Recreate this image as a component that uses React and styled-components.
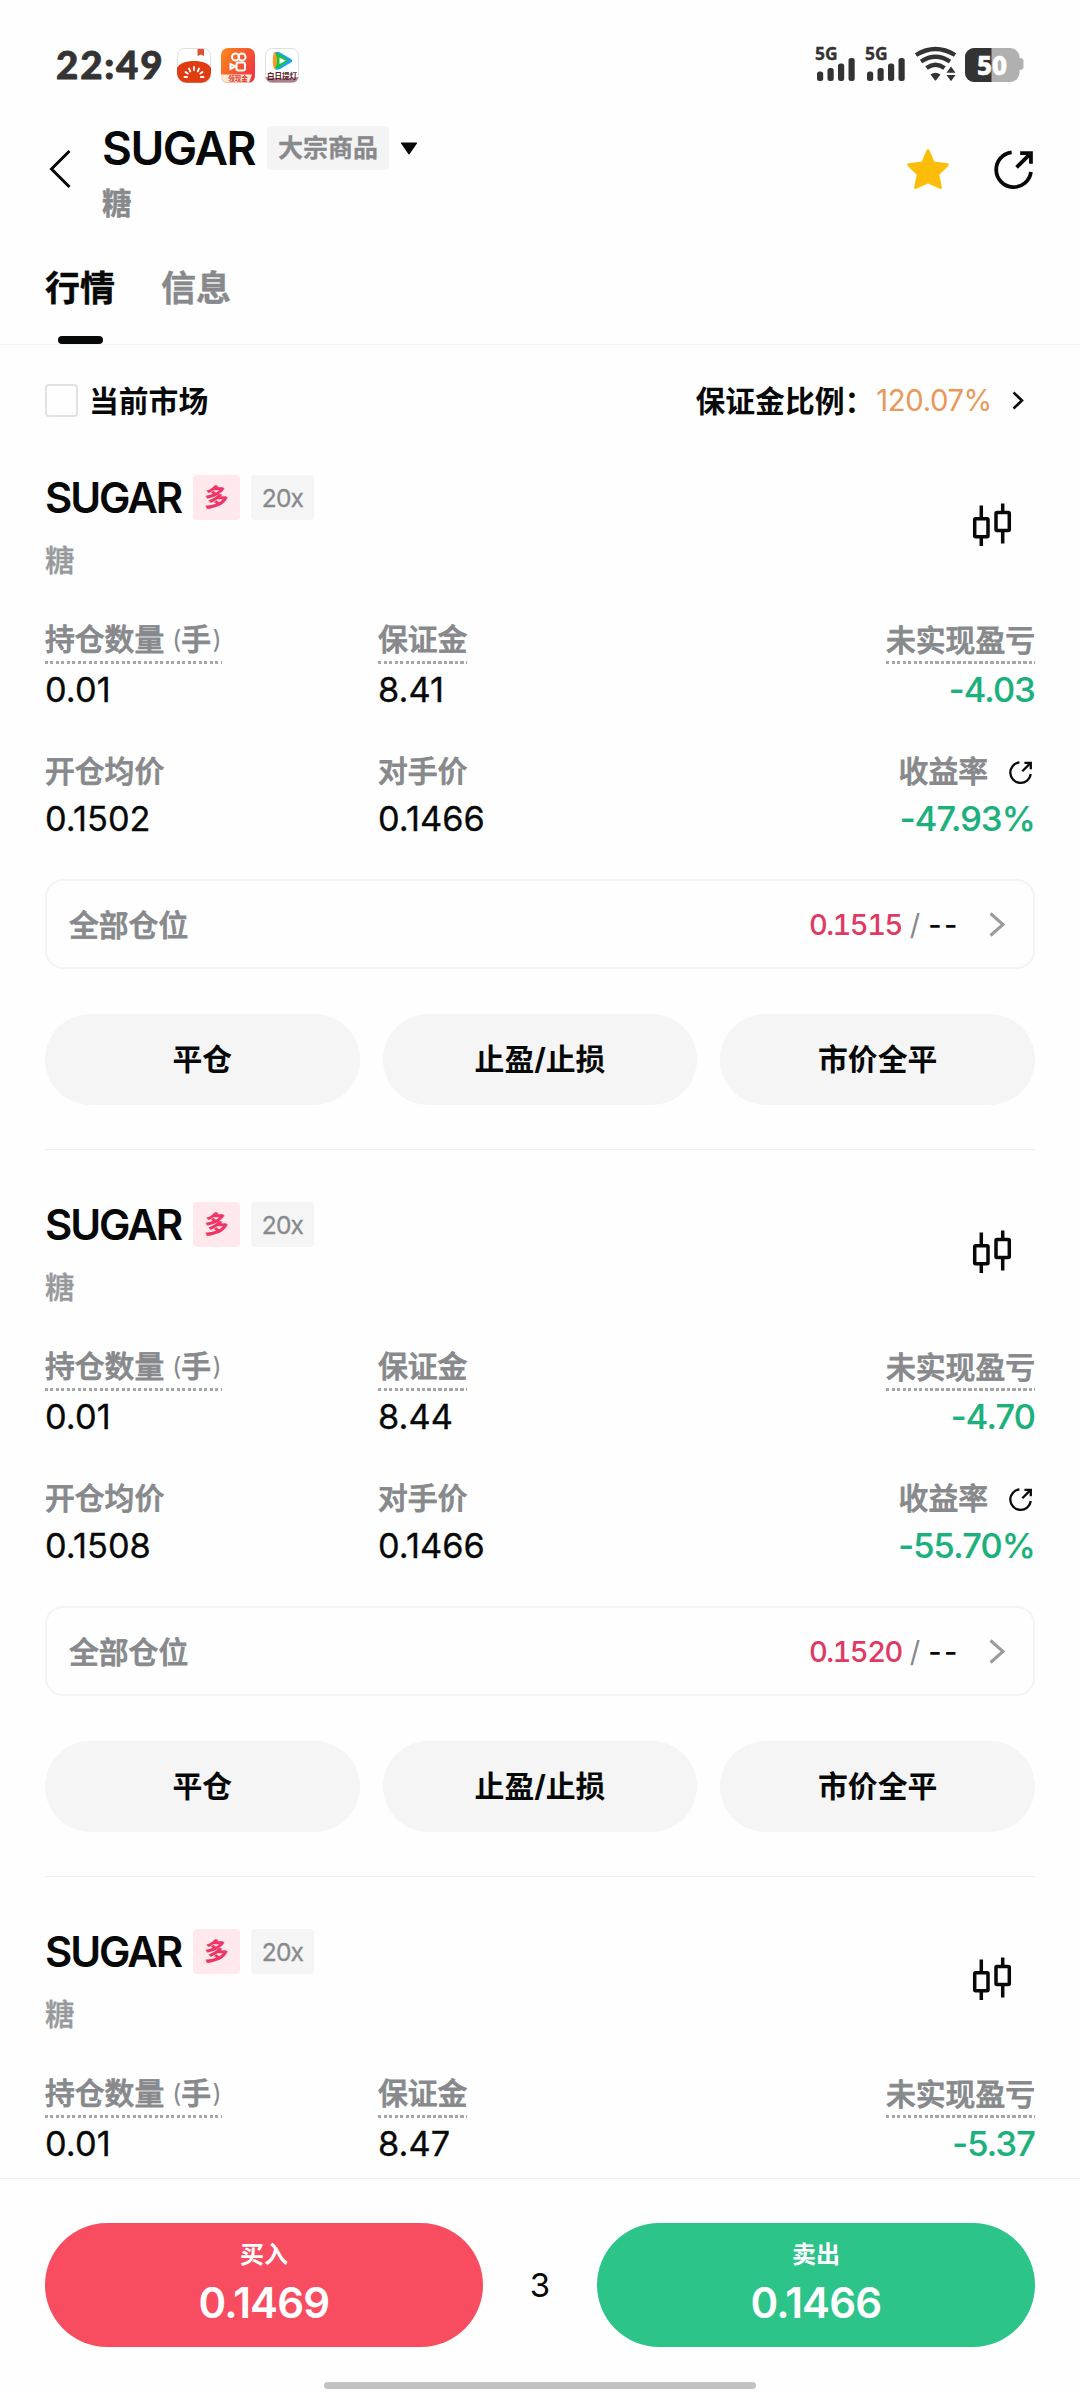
import React from 'react';
import styled, { createGlobalStyle } from 'styled-components';

const C = {
  ink: '#070808',
  status: '#333333',
  gray: '#87898c',
  light: '#97999c',
  fill: '#f5f5f5',
  line: '#f3f3f3',
  green: '#1bb07c',
  red: '#e03a62',
};

const Global = createGlobalStyle`
  * { box-sizing: border-box; }
  body {
    margin: 0;
    background: #fefefe;
    color: ${C.ink};
    font-family: Inter, "Noto Sans CJK SC", sans-serif;
  }
  svg { display: block; flex: none; overflow: visible; }
  button { font-family: inherit; border: 0; padding: 0; color: inherit; }
`;

const Page = styled.div`
  width: 1080px;
  height: 2392px;
  overflow: hidden;
  display: flex;
  flex-direction: column;
  background: #fefefe;
`;

/* ---------- status bar ---------- */
const StatusBar = styled.div`
  height: 96px;
  flex: none;
  display: flex;
  justify-content: space-between;
  align-items: flex-start;
  padding: 39px 56px 0 56px;
`;
const StatusLeft = styled.div`
  display: flex;
  align-items: center;
  height: 52px;
`;
const Clock = styled.span`
  width: 122px;
  font-family: Lato, sans-serif;
  font-weight: 900;
  font-size: 38.5px;
  line-height: 48px;
  margin-top: -2px;
  letter-spacing: 1.8px;
  -webkit-text-stroke: 0.8px ${C.status};
  color: ${C.status};
`;
const AppIcons = styled.div`
  display: flex;
  gap: 10px;
  margin-left: -1px;
`;

/* ---------- header ---------- */
const Header = styled.header`
  height: 144px;
  flex: none;
  display: flex;
  padding: 28px 47px 0 48px;
`;
const BackButton = styled.div`
  width: 54px;
  padding-top: 25px;
`;
const TitleBlock = styled.div`
  flex: 1;
`;
const TitleRow = styled.div`
  display: flex;
  align-items: center;
  height: 48px;
`;
const Title = styled.h1`
  margin: 0;
  width: 165px;
  font-size: 46px;
  line-height: 48px;
  font-weight: 600;
  letter-spacing: -1.5px;
`;
const MarketTag = styled.span`
  width: 122px;
  height: 44px;
  border-radius: 4px;
  background: #f4f4f5;
  text-align: center;
  font-size: 25px;
  line-height: 44px;
  font-weight: 700;
  -webkit-text-stroke: 0.3px ${C.gray};
  color: ${C.gray};
  margin-right: 11px;
`;
const Subtitle = styled.div`
  margin-top: 11px;
  font-size: 29.5px;
  line-height: 40px;
  font-weight: ${(p) => (p.$strong ? 700 : 500)};
  color: ${(p) => (p.$strong ? C.gray : C.light)};
  -webkit-text-stroke: 0.4px ${(p) => (p.$strong ? C.gray : C.light)};
`;
const HeaderActions = styled.div`
  display: flex;
  gap: 44px;
  padding-top: 24px;
`;
const ShareSlot = styled.div`
  padding-top: 2px;
`;

/* ---------- tabs ---------- */
const Tabs = styled.nav`
  height: 105px;
  flex: none;
  display: flex;
  gap: 46px;
  padding: 24px 45px 0;
  border-bottom: 1px solid ${C.line};
`;
const Tab = styled.div`
  display: flex;
  flex-direction: column;
  align-items: center;
  justify-content: space-between;
  font-size: 35px;
  line-height: 48px;
  font-weight: 700;
  -webkit-text-stroke: 0.4px currentColor;
  color: ${(p) => (p.$active ? C.ink : C.gray)};
`;
const Indicator = styled.i`
  width: 45px;
  height: 8px;
  border-radius: 4px;
  background: ${C.ink};
`;

/* ---------- filter row ---------- */
const FilterRow = styled.div`
  height: 78px;
  flex: none;
  display: flex;
  align-items: center;
  padding: 33px 56px 0 45px;
  font-size: 30px;
  line-height: 44px;
`;
const Checkbox = styled.i`
  width: 33px;
  height: 33px;
  border: 2.5px solid #e1e3e3;
  border-radius: 4px;
  margin-right: 11px;
`;
const FilterLabel = styled.span`
  font-weight: 600;
  font-size: 29.8px;
`;
const Ratio = styled.div`
  margin-left: auto;
  display: flex;
  align-items: center;
`;
const RatioValue = styled.span`
  font-size: 29.3px;
  letter-spacing: -0.4px;
  color: #e9985a;
  margin: 0 20px 0 2px;
`;

/* ---------- positions ---------- */
const List = styled.main`
  flex: 1;
  min-height: 0;
  overflow: hidden;
  padding: 0 45px;
`;
const Card = styled.section`
  height: 727px;
  padding-top: 52px;
  border-bottom: 1px solid #efefef;
  &:last-child { height: auto; border-bottom: 0; }
`;
const CardHead = styled.div`
  display: flex;
  justify-content: space-between;
  padding-right: 23px;
`;
const NameRow = styled.div`
  display: flex;
  align-items: center;
  height: 45px;
`;
const Name = styled.h2`
  margin: 0;
  width: 148px;
  font-size: 42px;
  line-height: 46px;
  font-weight: 600;
  letter-spacing: -2.1px;
`;
const Badge = styled.span`
  width: ${(p) => (p.$long ? 47 : 63)}px;
  height: 45px;
  border-radius: 4px;
  text-align: center;
  line-height: 46px;
  font-size: ${(p) => (p.$long ? 24 : 24.5)}px;
  font-weight: ${(p) => (p.$long ? 700 : 400)};
  letter-spacing: ${(p) => (p.$long ? 0 : -0.8)}px;
  color: ${(p) => (p.$long ? '#ee3565' : C.gray)};
  -webkit-text-stroke: 0.3px currentColor;
  background: ${(p) => (p.$long ? '#ffe9ed' : C.fill)};
  margin-right: 11px;
`;
const CardSub = styled(Subtitle)`
  margin-top: 20px;
`;
const ChartSlot = styled.div`
  padding-top: 28px;
`;
const Stats = styled.div`
  display: grid;
  grid-template-columns: 333px 1fr auto;
  margin-top: 38px;
  row-gap: 41px;
`;
const Stat = styled.div`
  display: flex;
  flex-direction: column;
  align-items: ${(p) => (p.$end ? 'flex-end' : 'flex-start')};
`;
const StatLabel = styled.div`
  display: flex;
  align-items: center;
  height: ${(p) => (p.$dotted ? 46 : 40)}px;
  padding-top: ${(p) => (p.$low ? 2 : 0)}px;
  padding-bottom: ${(p) => (p.$dotted ? 5 : 0)}px;
  margin-bottom: ${(p) => (p.$dotted ? 6 : 8)}px;
  font-size: 29.8px;
  line-height: 40px;
  font-weight: 500;
  color: ${C.gray};
  -webkit-text-stroke: 0.8px ${C.gray};
  background: ${(p) =>
    p.$dotted
      ? 'repeating-linear-gradient(90deg, #a4a6a8 0 3px, transparent 3px 5.5px) left bottom / 100% 3px no-repeat'
      : 'none'};
`;
const Paren = styled.span`
  font-size: 25px;
  font-weight: 400;
  margin: 0 0 0 ${(p) => (p.$open ? 8 : 1.5)}px;
  -webkit-text-stroke: 0;
`;
const LabelIcon = styled.span`
  margin: 2px 3px 0 21px;
`;
const StatValue = styled.div`
  font-size: 34.3px;
  line-height: 40px;
  letter-spacing: ${(p) => (p.$loss ? -0.8 : 0.1)}px;
  font-weight: ${(p) => (p.$loss ? 500 : 400)};
  -webkit-text-stroke: ${(p) => (p.$loss ? 0.2 : 0.3)}px currentColor;
  color: ${(p) => (p.$loss ? C.green : C.ink)};
`;
const StopRow = styled.div`
  display: flex;
  align-items: center;
  height: 90px;
  margin-top: 40px;
  padding: 0 28px 0 22px;
  border: 2.5px solid #f4f4f5;
  border-radius: 18px;
`;
const StopLabel = styled.span`
  flex: 1;
  margin-top: -3px;
  font-size: 29.8px;
  font-weight: 500;
  color: ${C.gray};
  -webkit-text-stroke: 0.8px ${C.gray};
`;
const StopPrice = styled.span`
  font-size: 29px;
  font-weight: 500;
  font-variant-numeric: tabular-nums;
  letter-spacing: -1.5px;
  color: ${C.red};
`;
const StopSlash = styled.span`
  font-size: 29px;
  color: ${C.gray};
  margin: 0 8px 0 8px;
`;
const StopNone = styled.span`
  font-size: 29px;
  font-weight: 500;
  letter-spacing: 2.5px;
  margin-right: 29px;
`;
const Actions = styled.div`
  display: grid;
  grid-template-columns: repeat(3, 1fr);
  gap: 23px;
  margin-top: 45px;
`;
const Action = styled.button`
  height: 91px;
  border-radius: 46px;
  background: ${C.fill};
  font-size: 29.8px;
  line-height: 88px;
  padding-bottom: 2px;
  font-weight: 700;
`;

/* ---------- trade bar ---------- */
const TradeBar = styled.footer`
  height: 214px;
  flex: none;
  border-top: 1px solid #efefef;
  padding: 44px 45px 3px;
  display: flex;
  flex-direction: column;
  justify-content: space-between;
  align-items: center;
`;
const TradeRow = styled.div`
  width: 100%;
  display: flex;
  align-items: center;
`;
const Trade = styled.button`
  width: 438px;
  height: 124px;
  border-radius: 62px;
  background: ${(p) => p.$bg};
  color: #fff;
  display: flex;
  flex-direction: column;
  align-items: center;
  padding-top: 16px;
`;
const TradeLabel = styled.span`
  font-size: 24px;
  line-height: 32px;
  font-weight: 600;
`;
const TradePrice = styled.span`
  font-size: 42px;
  line-height: 50px;
  margin-top: 7px;
  font-weight: 600;
  letter-spacing: -0.8px;
`;
const Spread = styled.span`
  flex: 1;
  text-align: center;
  font-size: 33px;
  line-height: 40px;
`;
const HomeBar = styled.i`
  width: 432px;
  height: 7px;
  border-radius: 4px;
  background: #c2c2c2;
`;

/* ---------- drawings ---------- */
const TomatoIcon = () => (
  <svg width="34" height="35" viewBox="0 0 34 35">
    <rect x="0.5" y="0.5" width="33" height="34" rx="7" fill="#fff" stroke="#dedede" />
    <path d="M20.500 1h6.500v7l-3.250-1.500-3.250 1.500z" fill="#e2512f" />
    <path d="M0 20C2 15.500 9 13 17 13s15 2.500 17 7v4c0 7-5 10.800-10 10.800H10C5 34.800 0 31 0 24z" fill="#e03c12" />
    <g stroke="#fff" strokeWidth="1.900" strokeLinecap="round">
      <path d="M17 19v3M12 20.500l1.200 2.800M22 20.500l-1.200 2.800M8.500 24l2.200 1.600M25.500 24l-2.200 1.600M7.500 29h2.500M24 29h2.500" />
    </g>
  </svg>
);
const CameraIcon = () => (
  <svg width="34" height="35" viewBox="0 0 34 35">
    <defs>
      <linearGradient id="cam" x1="0" y1="0" x2="1" y2="0.6">
        <stop offset="0" stopColor="#fb8a1a" />
        <stop offset="1" stopColor="#f0383f" />
      </linearGradient>
    </defs>
    <rect width="34" height="35" rx="7" fill="url(#cam)" />
    <g fill="none" stroke="#fff" strokeWidth="2">
      <circle cx="14.500" cy="9" r="3.500" />
      <circle cx="21" cy="9" r="3.500" />
      <rect x="15.500" y="14.500" width="8.500" height="8" rx="2" />
      <path d="M14.500 18.500l-5-2.500v5z" />
    </g>
    <path d="M0 26.500h31l-3 8.300H7A7 7 0 0 1 0 28z" fill="#ffe9d2" />
    <text x="17" y="33.200" textAnchor="middle" fontSize="6.500" fontWeight="700" fill="#d6382f">领现金</text>
  </svg>
);
const VideoIcon = () => (
  <svg width="34" height="35" viewBox="0 0 34 35">
    <rect x="0.5" y="0.5" width="33" height="34" rx="7" fill="#fff" stroke="#dedede" />
    <path d="M9 4q-2.500 8.500 0 17l6-2V6z" fill="#fb9a24" />
    <path d="M10 4.500Q12 3 15 4.500L26 11q2.500 1.800 0 3.600L15 21q-3 1.500-5 .2 3-2.700 3-8.200t-3-8.500z" fill="#1fa0ea" />
    <path d="M10.500 5.500q2.500-.5 5 1l6 4.500q2 1.500 0 3l-7 5q-2.500 1.500-4.500 1 2-3 2-7.500t-1.500-7z" fill="#1cc33d" />
    <path d="M14.500 9.500l6 3.300-6 3.300z" fill="#fff" />
    <path d="M.5 29q16 2.500 33 0a7 7 0 0 1-7 5.500h-19A7 7 0 0 1 .5 29z" fill="#a98088" />
    <text x="17" y="30.800" textAnchor="middle" fontSize="7.500" fontWeight="700" fill="#5a1a26">白日提灯</text>
  </svg>
);

const StatusIcons = () => (
  <svg width="210" height="44" viewBox="0 -8 210 44" fill={C.status}>
    {[0, 50].map((dx) => (
      <g key={dx} transform={`translate(${dx} 0)`}>
        <text x="1" y="13" fontFamily="Noto Sans" fontWeight="700" fontSize="17.500" stroke={C.status} strokeWidth="0.300">5G</text>
        <rect x="3" y="24.500" width="6.200" height="9.500" rx="2.500" />
        <rect x="13.500" y="21" width="6.200" height="13" rx="2.500" />
        <rect x="24" y="16.500" width="6.200" height="17.500" rx="2.500" />
        <rect x="34.500" y="11" width="6.200" height="23" rx="2.500" />
      </g>
    ))}
    <g fill="none" stroke={C.status} strokeWidth="4.200">
      <path d="M102 8Q121.500 -4 141 8" />
      <path d="M107 14.500Q121.500 5 136 14.500" />
      <path d="M112.500 21Q121.500 14.500 130.500 21" />
    </g>
    <path d="M116.500 27.500q5-3.500 10 0l-4.200 5.500q-.8 1-1.600 0z" />
    <path d="M132.500 25.800l4.500-6.300 4.500 6.300zM132.500 28h9l-4.500 6.300z" />
    <path d="M160 1h36.500a9 9 0 0 1 9 9v1q4 0 4 3v6q0 3-4 3v3a9 9 0 0 1-9 9H160a9 9 0 0 1-9-9V10a9 9 0 0 1 9-9z" fill="#b0b0b0" />
    <path d="M160 1h17.500v34H160a9 9 0 0 1-9-9V10a9 9 0 0 1 9-9z" />
    <text x="178" y="27.500" textAnchor="middle" fontFamily="Noto Sans" fontWeight="800" fontSize="26" fill="#fff" stroke="#fff" strokeWidth="0.500">50</text>
  </svg>
);

const Back = () => (
  <svg width="24" height="40" viewBox="0 0 24 40">
    <path d="M21.500 2L3.500 20l18 18" fill="none" stroke={C.ink} strokeWidth="3" />
  </svg>
);
const Caret = () => (
  <svg width="18" height="13" viewBox="0 0 18 13">
    <path d="M1.500.5h15q1 0 .4.900L9.700 12q-.7.800-1.400 0L1.100 1.400Q.5.500 1.500.5z" fill={C.ink} />
  </svg>
);
const Star = () => (
  <svg width="44" height="42" viewBox="0 0 44 42">
    <path
      d="M22 2.500l5.400 12.500 14 1.700-9.600 9.600 2.700 13.200L22 34l-12.500 5.500 2.700-13.200-9.600-9.600 14-1.700z"
      fill="#fbbd08" stroke="#fbbd08" strokeWidth="2.800" strokeLinejoin="round"
    />
  </svg>
);
const ShareCircle = ({ size, weight }) => (
  <svg width={size} height={size} viewBox="0 0 38 38" fill="none" stroke={C.ink} strokeWidth={weight}>
    <path d="M17.200 2.300A17 17 0 1 0 36 21.500" />
    <path d="M22 17L35 4" />
    <path d="M25.500 3H36v10.500" />
  </svg>
);
const Chevron = ({ w, h, color, weight }) => (
  <svg width={w} height={h} viewBox={`0 0 ${w} ${h}`}>
    <path d={`M1.500 1.500L${w - 2} ${h / 2}L1.500 ${h - 1.5}`} fill="none" stroke={color} strokeWidth={weight} />
  </svg>
);
const Candles = () => (
  <svg width="40" height="44" viewBox="0 0 40 44" fill="none" stroke={C.ink} strokeWidth="3.500">
    <path d="M9.300 2.500v12M9.300 35v8M30.700.5v10M30.700 29v11.500" />
    <rect x="2.700" y="15.700" width="13.300" height="18" rx="1" />
    <rect x="24" y="9.500" width="13.300" height="18" rx="1" />
  </svg>
);

/* ---------- data ---------- */
const positions = [
  { size: '0.01', margin: '8.41', pnl: '-4.03', detail: { open: '0.1502', last: '0.1466', rate: '-47.93%', stop: '0.1515' } },
  { size: '0.01', margin: '8.44', pnl: '-4.70', detail: { open: '0.1508', last: '0.1466', rate: '-55.70%', stop: '0.1520' } },
  { size: '0.01', margin: '8.47', pnl: '-5.37' },
];

const Position = ({ size, margin, pnl, detail }) => (
  <Card>
    <CardHead>
      <div>
        <NameRow>
          <Name>SUGAR</Name>
          <Badge $long>多</Badge>
          <Badge>20x</Badge>
        </NameRow>
        <CardSub>糖</CardSub>
      </div>
      <ChartSlot><Candles /></ChartSlot>
    </CardHead>
    <Stats>
      <Stat>
        <StatLabel $dotted>持仓数量<Paren $open>(</Paren>手<Paren>)</Paren></StatLabel>
        <StatValue>{size}</StatValue>
      </Stat>
      <Stat>
        <StatLabel $dotted>保证金</StatLabel>
        <StatValue>{margin}</StatValue>
      </Stat>
      <Stat $end>
        <StatLabel $dotted $low>未实现盈亏</StatLabel>
        <StatValue $loss>{pnl}</StatValue>
      </Stat>
      {detail && (
        <>
          <Stat>
            <StatLabel>开仓均价</StatLabel>
            <StatValue>{detail.open}</StatValue>
          </Stat>
          <Stat>
            <StatLabel>对手价</StatLabel>
            <StatValue>{detail.last}</StatValue>
          </Stat>
          <Stat $end>
            <StatLabel>收益率<LabelIcon><ShareCircle size={23} weight={3.8} /></LabelIcon></StatLabel>
            <StatValue $loss>{detail.rate}</StatValue>
          </Stat>
        </>
      )}
    </Stats>
    {detail && (
      <>
        <StopRow>
          <StopLabel>全部仓位</StopLabel>
          <StopPrice>{detail.stop}</StopPrice>
          <StopSlash>/</StopSlash>
          <StopNone>--</StopNone>
          <Chevron w={16} h={25} color="#9b9b9b" weight={3} />
        </StopRow>
        <Actions>
          <Action>平仓</Action>
          <Action>止盈/止损</Action>
          <Action>市价全平</Action>
        </Actions>
      </>
    )}
  </Card>
);

export default function App() {
  return (
    <Page>
      <Global />
      <StatusBar>
        <StatusLeft>
          <Clock>22:49</Clock>
          <AppIcons>
            <TomatoIcon />
            <CameraIcon />
            <VideoIcon />
          </AppIcons>
        </StatusLeft>
        <StatusIcons />
      </StatusBar>
      <Header>
        <BackButton><Back /></BackButton>
        <TitleBlock>
          <TitleRow>
            <Title>SUGAR</Title>
            <MarketTag>大宗商品</MarketTag>
            <Caret />
          </TitleRow>
          <Subtitle $strong>糖</Subtitle>
        </TitleBlock>
        <HeaderActions>
          <Star />
          <ShareSlot><ShareCircle size={39} weight={3.7} /></ShareSlot>
        </HeaderActions>
      </Header>
      <Tabs>
        <Tab $active>行情<Indicator /></Tab>
        <Tab>信息</Tab>
      </Tabs>
      <FilterRow>
        <Checkbox />
        <FilterLabel>当前市场</FilterLabel>
        <Ratio>
          <FilterLabel>保证金比例：</FilterLabel>
          <RatioValue>120.07%</RatioValue>
          <Chevron w={12} h={19} color={C.ink} weight={2.6} />
        </Ratio>
      </FilterRow>
      <List>
        {positions.map((p) => <Position key={p.pnl} {...p} />)}
      </List>
      <TradeBar>
        <TradeRow>
          <Trade $bg="#f84d60">
            <TradeLabel>买入</TradeLabel>
            <TradePrice>0.1469</TradePrice>
          </Trade>
          <Spread>3</Spread>
          <Trade $bg="#2dc489">
            <TradeLabel>卖出</TradeLabel>
            <TradePrice>0.1466</TradePrice>
          </Trade>
        </TradeRow>
        <HomeBar />
      </TradeBar>
    </Page>
  );
}
